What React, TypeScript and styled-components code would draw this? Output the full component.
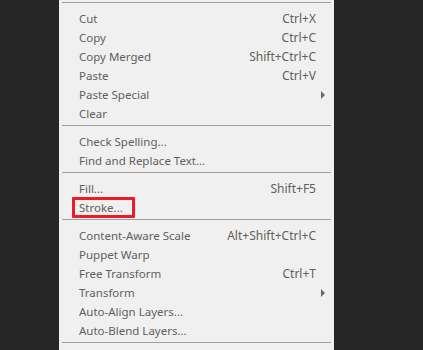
import React from 'react';
import styled, { createGlobalStyle } from 'styled-components';

const GlobalStyle = createGlobalStyle`
  html, body {
    margin: 0;
    padding: 0;
    background: #262626;
    height: 100%;
    overflow: hidden;
  }
`;

const Page = styled.div`
  display: flex;
  padding-left: 59px;
  height: 350px;
`;

const Menu = styled.div`
  width: 275px;
  margin-top: -3px;
  background: #f0f0f0;
  font-family: 'Noto Sans', 'Open Sans', sans-serif;
  font-size: 12px;
  color: #606060;
`;

const Separator = styled.div<{ $top?: number; $bottom?: number }>`
  height: 1px;
  background: #a0a0a0;
  margin: ${p => p.$top ?? 3}px 3px ${p => p.$bottom ?? 5}px;
`;

const Row = styled.div`
  box-sizing: border-box;
  display: flex;
  align-items: center;
  height: 19px;
  padding: 2px 18px 0 20px;
  white-space: nowrap;
`;

const Label = styled.span<{ $marked?: boolean }>`
  flex: 1;
  display: flex;
  font-size: 11.5px;
  & > span {
    position: relative;
  }
  ${p =>
    p.$marked &&
    `
    & > span::after {
      content: '';
      position: absolute;
      left: -7px;
      right: -12px;
      top: -3px;
      bottom: -3px;
      border: 3px solid #ec1c24;
      border-radius: 1px;
    }
  `}
`;

const Shortcut = styled.span`
  text-align: right;
`;

const Arrow = styled.span`
  width: 0;
  height: 0;
  border-top: 4px solid transparent;
  border-bottom: 4px solid transparent;
  border-left: 4px solid #6a6a6a;
  margin-right: -9px;
`;

type Item = { label: string; shortcut?: string; sub?: boolean; marked?: boolean };

const groups: Item[][] = [
  [
    { label: 'Cut', shortcut: 'Ctrl+X' },
    { label: 'Copy', shortcut: 'Ctrl+C' },
    { label: 'Copy Merged', shortcut: 'Shift+Ctrl+C' },
    { label: 'Paste', shortcut: 'Ctrl+V' },
    { label: 'Paste Special', sub: true },
    { label: 'Clear' },
  ],
  [{ label: 'Check Spelling...' }, { label: 'Find and Replace Text...' }],
  [{ label: 'Fill...', shortcut: 'Shift+F5' }, { label: 'Stroke...', marked: true }],
  [
    { label: 'Content-Aware Scale', shortcut: 'Alt+Shift+Ctrl+C' },
    { label: 'Puppet Warp' },
    { label: 'Free Transform', shortcut: 'Ctrl+T' },
    { label: 'Transform', sub: true },
    { label: 'Auto-Align Layers...' },
    { label: 'Auto-Blend Layers...' },
  ],
];

export default function App() {
  return (
    <>
      <GlobalStyle />
      <Page>
        <Menu>
          <Separator $top={5} $bottom={5} />
          {groups.map((group, gi) => (
            <React.Fragment key={gi}>
              {gi > 0 && <Separator />}
              {group.map(item => (
                <Row key={item.label}>
                  <Label $marked={item.marked}>
                    <span>{item.label}</span>
                  </Label>
                  {item.shortcut && <Shortcut>{item.shortcut}</Shortcut>}
                  {item.sub && <Arrow />}
                </Row>
              ))}
            </React.Fragment>
          ))}
          <Separator />
        </Menu>
      </Page>
    </>
  );
}
